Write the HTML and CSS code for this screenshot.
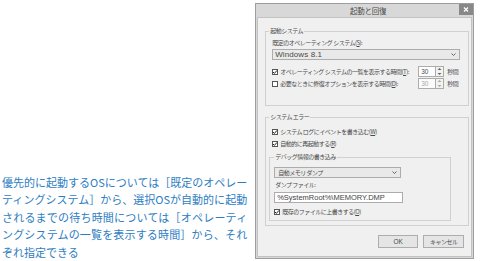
FILE: index.html
```html
<!DOCTYPE html>
<html lang="ja">
<head>
<meta charset="utf-8">
<title>起動と回復</title>
<link rel="stylesheet" href="styles.css">
</head>
<body>
<div class="page">
  <div class="caption">
    <div class="line">優先的に起動するOSについては［既定のオペレー</div>
    <div class="line">ティングシステム］から、選択OSが自動的に起動</div>
    <div class="line">されるまでの待ち時間については［オペレーティ</div>
    <div class="line">ングシステムの一覧を表示する時間］から、それ</div>
    <div class="line last">ぞれ指定できる</div>
  </div>

  <div class="dialog">
    <div class="titlebar">
      <span></span>
      <span class="title">起動と回復</span>
      <span class="close"><svg width="14" height="11" viewBox="0 0 14 11"><path d="M5 3.5 L9 7.5 M9 3.5 L5 7.5" stroke="#fff" stroke-width="1.2"/></svg></span>
    </div>
    <div class="panel">
      <div class="group g1">
        <div class="ghead"><span class="gl"></span><span class="gtitle">起動システム</span><span class="gr"></span></div>
        <div class="gbody b1">
          <div class="label">既定のオペレーティング システム(<u>S</u>):</div>
          <div class="select wide"><span class="lat">Windows 8.1</span><svg class="chev" width="5" height="3" viewBox="0 0 5 3"><polyline points="0.5,0.5 2.5,2.5 4.5,0.5" fill="none" stroke="#555" stroke-width="0.9"/></svg></div>
          <div class="row r1">
            <span class="cb"><svg width="6" height="6" viewBox="0 0 6 6"><polyline points="1,3 2.4,4.4 5,1.4" fill="none" stroke="#222" stroke-width="1"/></svg></span>
            <span class="rowtext">オペレーティング システムの一覧を表示する時間(<u>T</u>):</span>
            <span class="num">30</span>
            <span class="spin"><svg width="9" height="11" viewBox="0 0 9 11"><path d="M2.5 4 L4.5 2 L6.5 4 Z M2.5 7 L4.5 9 L6.5 7 Z" fill="#666"/></svg></span>
            <span class="unit">秒間</span>
          </div>
          <div class="row r2">
            <span class="cb"></span>
            <span class="rowtext">必要なときに修復オプションを表示する時間(<u>D</u>):</span>
            <span class="num off">30</span>
            <span class="spin off"><svg width="9" height="11" viewBox="0 0 9 11"><path d="M2.5 4 L4.5 2 L6.5 4 Z M2.5 7 L4.5 9 L6.5 7 Z" fill="#aaa"/></svg></span>
            <span class="unit">秒間</span>
          </div>
        </div>
      </div>

      <div class="group g2">
        <div class="ghead"><span class="gl"></span><span class="gtitle">システム エラー</span><span class="gr"></span></div>
        <div class="gbody b2">
          <div class="row r3">
            <span class="cb"><svg width="6" height="6" viewBox="0 0 6 6"><polyline points="1,3 2.4,4.4 5,1.4" fill="none" stroke="#222" stroke-width="1"/></svg></span>
            <span class="rowtext">システム ログにイベントを書き込む(<u>W</u>)</span>
          </div>
          <div class="row r4">
            <span class="cb"><svg width="6" height="6" viewBox="0 0 6 6"><polyline points="1,3 2.4,4.4 5,1.4" fill="none" stroke="#222" stroke-width="1"/></svg></span>
            <span class="rowtext">自動的に再起動する(<u>R</u>)</span>
          </div>
          <div class="group g3">
            <div class="ghead"><span class="gl"></span><span class="gtitle">デバッグ情報の書き込み</span><span class="gr"></span></div>
            <div class="gbody b3">
              <div class="select narrow"><span>自動メモリ ダンプ</span><svg class="chev" width="5" height="3" viewBox="0 0 5 3"><polyline points="0.5,0.5 2.5,2.5 4.5,0.5" fill="none" stroke="#555" stroke-width="0.9"/></svg></div>
              <div class="label l2">ダンプ ファイル:</div>
              <div class="textbox">%SystemRoot%\MEMORY.DMP</div>
              <div class="row r5">
                <span class="cb"><svg width="6" height="6" viewBox="0 0 6 6"><polyline points="1,3 2.4,4.4 5,1.4" fill="none" stroke="#222" stroke-width="1"/></svg></span>
                <span class="rowtext">既存のファイルに上書きする(<u>O</u>)</span>
              </div>
            </div>
          </div>
        </div>
      </div>

      <div class="buttons">
        <span class="btn ok">OK</span>
        <span class="btn">キャンセル</span>
      </div>
    </div>
  </div>
</div>
</body>
</html>
```

FILE: styles.css
```css
html, body {
  margin: 0;
  padding: 0;
  background: #ffffff;
}

.page {
  display: flex;
  width: 480px;
  height: 261px;
  overflow: hidden;
}

/* caption text */
.caption {
  flex: 0 0 255px;
  box-sizing: border-box;
  align-self: flex-end;
  padding: 0 8px 0 2px;
  font-family: "Noto Sans CJK JP", "Noto Sans", sans-serif;
  font-size: 11px;
  line-height: 17.5px;
  color: #2d7dc2;
}
.line {
  text-align: justify;
  text-align-last: justify;
  white-space: nowrap;
}
.line.last {
  text-align-last: left;
}

/* dialog */
.dialog {
  flex: 0 0 219px;
  box-sizing: border-box;
  height: 256px;
  margin-top: 3px;
  border: 1px solid #9d9d9d;
  background: #d8d8d8;
  padding: 0 1px 1px 1px;
  display: flex;
  flex-direction: column;
  font-family: "Noto Sans CJK JP", "Noto Sans", sans-serif;
  font-size: 6px;
  letter-spacing: -0.5px;
  color: #4a4a4a;
}

.titlebar {
  flex: 0 0 13px;
  height: 13px;
  display: grid;
  grid-template-columns: 1fr auto 1fr;
  align-items: start;
}
.title {
  font-size: 7.5px;
  line-height: 13px;
  letter-spacing: -0.2px;
  color: #4a4a4a;
  padding-left: 7px;
}
.close {
  justify-self: end;
  margin-right: -1px;
  width: 14px;
  height: 11px;
  background: #888888;
  display: block;
}
.close svg { display: block; }

.panel {
  flex: 1 1 auto;
  min-height: 0;
  background: #f0f0f0;
  border: 1px solid #c2c2c2;
  padding-top: 9px;
  display: flex;
  flex-direction: column;
}

/* group boxes */
.group {
  display: flex;
  flex-direction: column;
  flex-shrink: 0;
}
.ghead {
  display: flex;
  height: 8px;
}
.gl {
  width: 3px;
  margin-top: 4px;
  border-top: 1px solid #d0d0d0;
  border-left: 1px solid #d0d0d0;
}
.gr {
  flex: 1;
  margin-top: 4px;
  border-top: 1px solid #d0d0d0;
  border-right: 1px solid #d0d0d0;
}
.gtitle {
  padding: 0 1px;
  line-height: 8px;
  white-space: nowrap;
}
.gbody {
  display: flex;
  flex-direction: column;
  border: 1px solid #d0d0d0;
  border-top: none;
}

.g1 { margin: 0 2px 0 7px; }
.g2 { margin: 7px 2px 0 7px; }
.g3 { margin: 4px 9px 0 -3px; }
.g3 .gl { width: 4px; }

.b1 { padding: 0 8px 16px 6px; }
.b2 { padding: 0 8px 4px 6px; }
.b3 { padding: 0 0 3px 4px; }

.label {
  line-height: 8px;
  height: 8px;
  margin-top: 4px;
  white-space: nowrap;
}
.l2 { margin-top: 3px; margin-left: 1px; }

.select {
  box-sizing: border-box;
  height: 11px;
  margin-top: 2px;
  border: 1px solid #acacac;
  background: #e9e9e9;
  display: flex;
  align-items: center;
  justify-content: space-between;
  padding: 0 3px 0 2px;
  line-height: 9px;
  white-space: nowrap;
}
.select.narrow {
  width: 127px;
  margin-top: 6px;
  padding-left: 3px;
}
.lat {
  font-family: "Liberation Sans", "Noto Sans", sans-serif;
  font-size: 8px;
  letter-spacing: 0.1px;
}
.chev { display: block; }

.textbox {
  box-sizing: border-box;
  width: 129px;
  height: 11px;
  margin-top: 3px;
  border: 1px solid #acacac;
  background: #ffffff;
  padding: 0 2px;
  line-height: 9px;
  font-family: "Liberation Sans", "Noto Sans", sans-serif;
  font-size: 7.5px;
  letter-spacing: 0;
  color: #444;
  white-space: nowrap;
  overflow: hidden;
}

.row {
  display: flex;
  align-items: center;
  height: 11px;
  flex-shrink: 0;
}
.r1 { margin-top: 6px; }
.r2 { margin-top: 1px; }
.r3 { margin-top: 6px; height: 10px; }
.r4 { margin-top: 2px; height: 10px; }
.r5 { margin-top: 4px; height: 10px; }

.cb {
  flex: 0 0 auto;
  box-sizing: border-box;
  width: 6px;
  height: 6px;
  border: 1px solid #555;
  background: #fff;
  margin-right: 2px;
  display: flex;
  align-items: center;
  justify-content: center;
  overflow: visible;
}
.cb svg {
  flex: 0 0 6px;
  display: block;
}
.rowtext {
  flex: 1;
  white-space: nowrap;
  line-height: 8px;
}

.num {
  box-sizing: border-box;
  width: 17px;
  height: 11px;
  border: 1px solid #acacac;
  border-right: none;
  background: #fff;
  padding-left: 2px;
  line-height: 9px;
  font-family: "Liberation Sans", sans-serif;
  font-size: 6.5px;
  letter-spacing: 0;
}
.num.off { color: #a8a8a8; background: #fbfbfb; }
.spin {
  box-sizing: border-box;
  width: 9px;
  height: 11px;
  border: 1px solid #acacac;
  background: #f2f2f2;
  display: block;
}
.spin svg { display: block; margin: -1px 0 0 -1px; }
.unit {
  margin-left: 3px;
  width: 13px;
  line-height: 8px;
}

.buttons {
  display: flex;
  justify-content: flex-end;
  gap: 5px;
  margin-top: 9px;
  padding-right: 7px;
  flex-shrink: 0;
}
.btn {
  box-sizing: border-box;
  width: 41px;
  height: 13px;
  border: 1px solid #adadad;
  background: #e5e5e5;
  text-align: center;
  line-height: 11px;
  font-size: 6px;
}
.btn.ok {
  width: 40px;
  font-family: "Liberation Sans", sans-serif;
  font-size: 6.5px;
  letter-spacing: 0;
}
```
